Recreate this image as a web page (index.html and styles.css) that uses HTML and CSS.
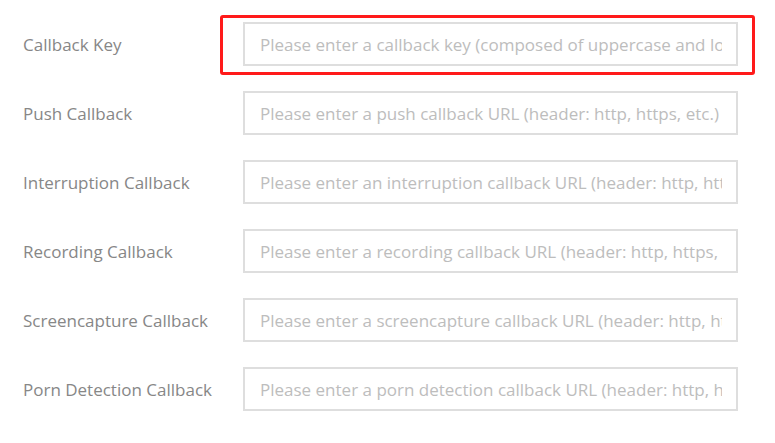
FILE: index.html
```html
<!DOCTYPE html>
<html lang="en">

<head>
	<meta charset="UTF-8">
	<meta name="viewport" content="width=device-width, initial-scale=1.0">
	<title>Callback settings</title>
	<link rel="stylesheet" href="styles.css">
</head>

<body>
	<form class="callback-form">
		<!-- 回调密钥（高亮） -->
		<div class="form-row highlight">
			<label class="form-label">Callback Key</label>
			<input class="form-input" type="text" placeholder="Please enter a callback key (composed of uppercase and lowercase letters and numbers)">
		</div>
		<div class="form-row">
			<label class="form-label">Push Callback</label>
			<input class="form-input" type="text" placeholder="Please enter a push callback URL (header: http, https, etc.)">
		</div>
		<div class="form-row">
			<label class="form-label">Interruption Callback</label>
			<input class="form-input" type="text" placeholder="Please enter an interruption callback URL (header: http, https, etc.)">
		</div>
		<div class="form-row">
			<label class="form-label">Recording Callback</label>
			<input class="form-input" type="text" placeholder="Please enter a recording callback URL (header: http, https, etc.)">
		</div>
		<div class="form-row">
			<label class="form-label">Screencapture Callback</label>
			<input class="form-input" type="text" placeholder="Please enter a screencapture callback URL (header: http, https, etc.)">
		</div>
		<div class="form-row">
			<label class="form-label">Porn Detection Callback</label>
			<input class="form-input" type="text" placeholder="Please enter a porn detection callback URL (header: http, https, etc.)">
		</div>
	</form>
</body>

</html>
```

FILE: styles.css
```css
html,
body {
	margin: 0;
	padding: 0;
	background: #fff
}

body {
	font-family: "Open Sans", "Noto Sans", sans-serif;
	font-size: 17px;
	color: #888
}

.callback-form {
	display: flex;
	flex-direction: column;
	gap: 25px;
	padding: 22px 0 0 23px
}

.form-row {
	display: flex;
	align-items: center;
	position: relative;
	height: 44px
}

.form-label {
	width: 220px;
	flex-shrink: 0;
	color: #878787;
	white-space: nowrap
}

.form-input {
	box-sizing: border-box;
	width: 495px;
	height: 44px;
	padding: 0 14px 0 15px;
	border: 2px solid #dedede;
	border-radius: 0;
	outline: none;
	font-family: inherit;
	font-size: 17px;
	color: #555;
	background: #fff
}

.form-input::placeholder {
	color: #bdbdbd
}

/* 红框标注 */
.highlight:after {
	content: "";
	position: absolute;
	left: 197px;
	top: -7px;
	width: 529px;
	height: 54px;
	border: 3px solid #ff1a1a;
	border-radius: 3px;
	pointer-events: none
}
```
